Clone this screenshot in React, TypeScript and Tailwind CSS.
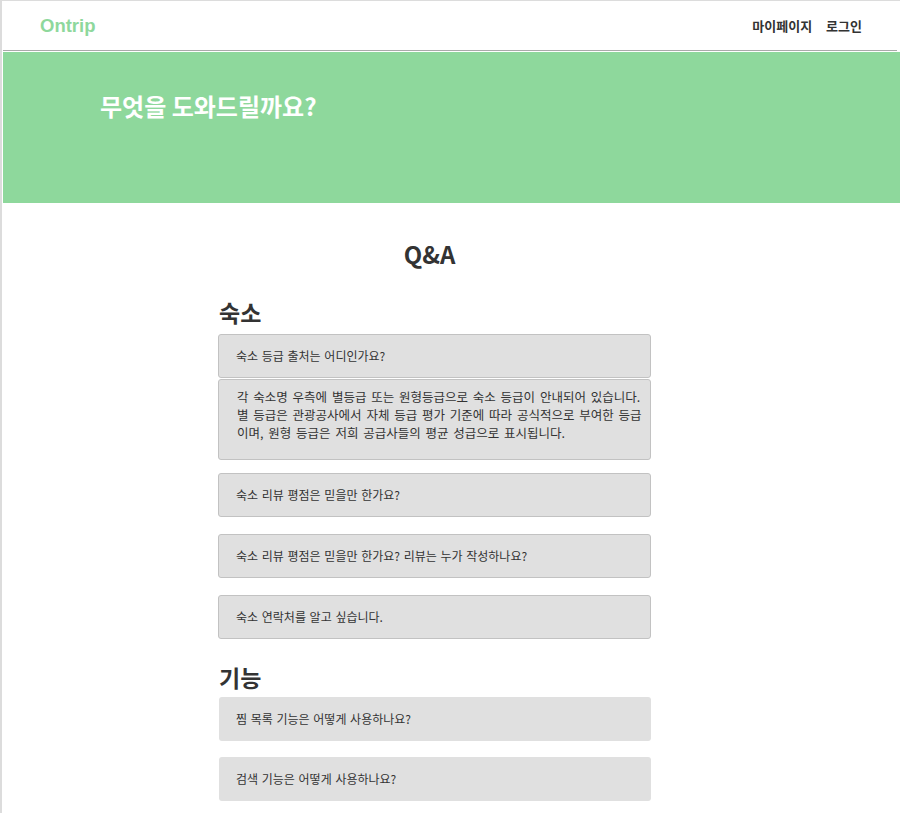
import React from 'react';

const stays = [
  '숙소 리뷰 평점은 믿을만 한가요?',
  '숙소 리뷰 평점은 믿을만 한가요? 리뷰는 누가 작성하나요?',
  '숙소 연락처를 알고 싶습니다.',
];

const features = ['찜 목록 기능은 어떻게 사용하나요?', '검색 기능은 어떻게 사용하나요?'];

function Question({ text, bordered = true }: { text: string; bordered?: boolean }) {
  return (
    <div
      className={
        'h-[44px] flex items-center px-[17px] rounded-[3px] bg-[#e0e0e0] text-[12px] text-[#333] [word-spacing:1px] ' +
        (bordered ? 'border border-[#c2c2c2]' : '')
      }
    >
      {text}
    </div>
  );
}

export default function App() {
  return (
    <div
      className="min-h-[813px] bg-white border-t border-l-2 border-[#dcdcdc]"
      style={{ fontFamily: '"Noto Sans CJK KR", "Noto Sans", sans-serif' }}
    >
      <header className="h-[50px] ml-px mr-[3px] flex items-center justify-between pl-[37px] pr-[35px] border-b border-[#aaaaaa]">
        <span
          className="text-[18.5px] font-bold text-[#8ed89c]"
          style={{ fontFamily: '"Liberation Sans", Arial, sans-serif' }}
        >
          Ontrip
        </span>
        <nav className="flex gap-[14px] text-[13px] font-bold text-[#333]">
          <a href="#">마이페이지</a>
          <a href="#">로그인</a>
        </nav>
      </header>

      <section className="mt-px ml-px h-[151px] bg-[#8ed89c] pl-[97px] pt-[37px]">
        <h1 className="text-[24px] leading-[34px] font-bold text-white">무엇을 도와드릴까요?</h1>
      </section>

      <main className="ml-[216px] w-[433px] pb-10">
        <h2 className="mt-[33px] pr-[10px] text-center text-[24px] leading-[36px] font-bold text-[#333]">Q&amp;A</h2>

        <h3 className="mt-[24px] mb-[5px] text-[23px] leading-[33px] font-bold text-[#333] pl-px">숙소</h3>
        <div className="flex flex-col">
          <Question text="숙소 등급 출처는 어디인가요?" />
          <div className="mt-px h-[81px] rounded-[3px] border border-[#c2c2c2] bg-[#e0e0e0] pl-[18px] pr-[4px] pt-[8px] text-[12.5px] leading-[18px] text-[#333] whitespace-nowrap [word-spacing:2px]">
            <p>각 숙소명 우측에 별등급 또는 원형등급으로 숙소 등급이 안내되어 있습니다.</p>
            <p>별 등급은 관광공사에서 자체 등급 평가 기준에 따라 공식적으로 부여한 등급</p>
            <p>이며, 원형 등급은 저희 공급사들의 평균 성급으로 표시됩니다.</p>
          </div>
          <div className="mt-[13px] flex flex-col gap-[17px]">
            {stays.map((q) => (
              <Question key={q} text={q} />
            ))}
          </div>
        </div>

        <h3 className="mt-[22px] mb-[3px] text-[23px] leading-[33px] font-bold text-[#333] pl-px">기능</h3>
        <div className="flex flex-col gap-[16px] pl-px">
          {features.map((q) => (
            <Question key={q} text={q} bordered={false} />
          ))}
        </div>
      </main>
    </div>
  );
}
